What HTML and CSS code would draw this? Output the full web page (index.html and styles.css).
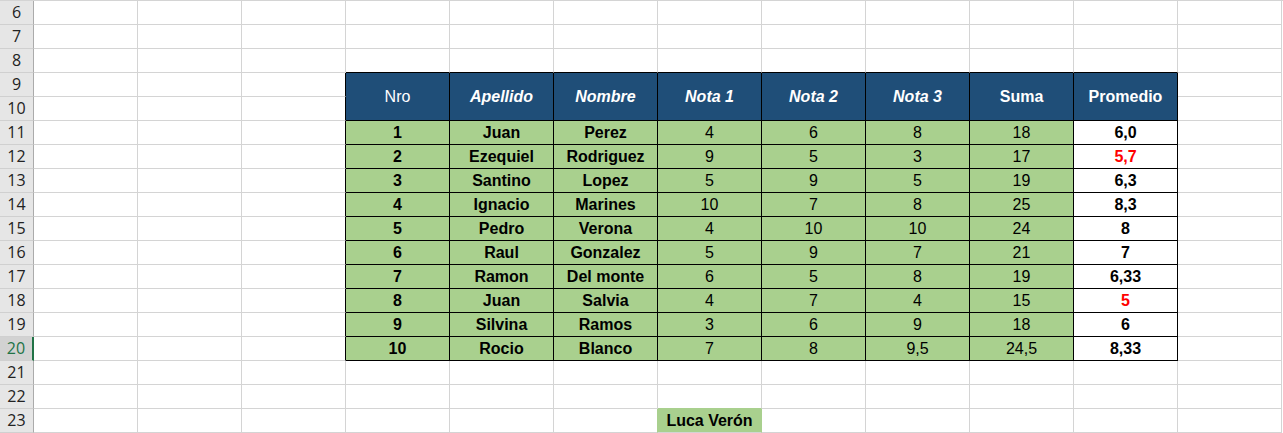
FILE: index.html
```html
<!DOCTYPE html>
<html>
<head>
    <title>Notas</title>
    <link rel="stylesheet" href="styles.css">
</head>
<body>
<div class="sheet" id="sheet"></div>

<script>
    const headers = [
        { text: 'Nro', cls: '' },
        { text: 'Apellido', cls: 'bi' },
        { text: 'Nombre', cls: 'bi' },
        { text: 'Nota 1', cls: 'bi' },
        { text: 'Nota 2', cls: 'bi' },
        { text: 'Nota 3', cls: 'bi' },
        { text: 'Suma', cls: 'b' },
        { text: 'Promedio', cls: 'b' }
    ];

    const data = [
        [1, 'Juan', 'Perez', 4, 6, 8, 18, '6,0'],
        [2, 'Ezequiel', 'Rodriguez', 9, 5, 3, 17, '5,7', true],
        [3, 'Santino', 'Lopez', 5, 9, 5, 19, '6,3'],
        [4, 'Ignacio', 'Marines', 10, 7, 8, 25, '8,3'],
        [5, 'Pedro', 'Verona', 4, 10, 10, 24, '8'],
        [6, 'Raul', 'Gonzalez', 5, 9, 7, 21, '7'],
        [7, 'Ramon', 'Del monte', 6, 5, 8, 19, '6,33'],
        [8, 'Juan', 'Salvia', 4, 7, 4, 15, '5', true],
        [9, 'Silvina', 'Ramos', 3, 6, 9, 18, '6'],
        [10, 'Rocio', 'Blanco', 7, 8, '9,5', '24,5', '8,33']
    ];

    function cell(cls, text) {
        return `<div class="cell ${cls}">${text === undefined ? '' : text}</div>`;
    }

    function rowHead(n) {
        return `<div class="rh${n === 20 ? ' rh-sel' : ''}">${n}</div>`;
    }

    function emptyRow(n, under) {
        let html = rowHead(n);
        for (let c = 1; c <= 12; c++) {
            let cls = '';
            if (under === 'table' && c >= 4 && c <= 11) cls = 'above';
            if (under === 'luca' && c === 7) cls = 'above-green';
            html += cell(cls);
        }
        return html;
    }

    let html = '';
    html += emptyRow(6);
    html += emptyRow(7);
    html += emptyRow(8, 'table');

    html += rowHead(9) + cell('') + cell('') + cell('left-of');
    html += headers.map(h => cell('head ' + h.cls, h.text)).join('');
    html += cell('');
    html += rowHead(10) + cell('') + cell('') + cell('left-of') + cell('');

    data.forEach((r, i) => {
        html += rowHead(11 + i) + cell('') + cell('') + cell('left-of');
        html += cell('data green b', r[0]);
        html += cell('data green b', r[1]);
        html += cell('data green b', r[2]);
        html += cell('data green', r[3]);
        html += cell('data green', r[4]);
        html += cell('data green', r[5]);
        html += cell('data green', r[6]);
        html += cell('data b' + (r[8] ? ' red' : ''), r[7]);
        html += cell('');
    });

    html += emptyRow(21);
    html += emptyRow(22, 'luca');

    html += rowHead(23);
    for (let c = 1; c <= 12; c++) {
        if (c === 6) html += cell('left-green');
        else if (c === 7) html += cell('name-tag b', 'Luca Verón');
        else html += cell('');
    }

    document.getElementById('sheet').innerHTML = html;
</script>
</body>
</html>
```

FILE: styles.css
```css
body {
    margin: 0;
    background: #fff;
    font-family: "Liberation Sans", Arial, sans-serif;
    overflow: hidden;
}
.sheet {
    display: grid;
    grid-template-columns: 34px repeat(12, 104px);
    grid-auto-rows: 24px;
    border-top: 1px solid #d4d4d4;
}
.cell {
    box-sizing: border-box;
    border-right: 1px solid #d4d4d4;
    border-bottom: 1px solid #d4d4d4;
    font-size: 16px;
    line-height: 23px;
    text-align: center;
    color: #000;
    white-space: nowrap;
}
.rh {
    box-sizing: border-box;
    background: #e6e6e6;
    border-right: 1px solid #ababab;
    border-bottom: 1px solid #d0d0d0;
    font-family: "Open Sans", "Noto Sans", sans-serif;
    font-size: 16px;
    line-height: 23px;
    text-align: center;
    color: #222;
}
.rh-sel {
    background: #d2d2d2;
    color: #217346;
    border-right: 2px solid #217346;
}
.above { border-bottom-color: #000; }
.left-of { border-right-color: #000; }
.above-green { border-bottom-color: #a9d08e; }
.left-green { border-right-color: #a9d08e; }
.head {
    grid-row: span 2;
    background: #1f4e78;
    color: #fff;
    border-right-color: #000;
    border-bottom-color: #000;
    line-height: 47px;
}
.data {
    border-right-color: #000;
    border-bottom-color: #000;
}
.green { background: #a9d08e; }
.name-tag {
    background: #a9d08e;
    border-right-color: #a9d08e;
}
.b { font-weight: bold; }
.bi { font-weight: bold; font-style: italic; }
.red { color: #ff0000; }
```
